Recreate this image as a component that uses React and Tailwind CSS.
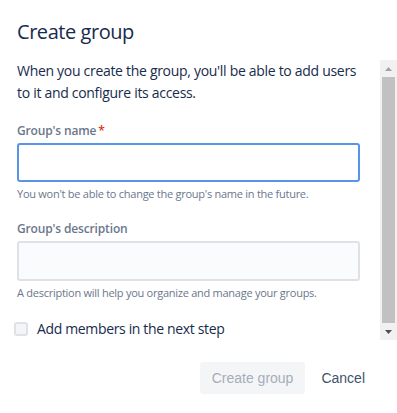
export default function App() {
  return (
    <div className="w-[397px] h-[413px] bg-white flex flex-col" style={{ fontFamily: '"Open Sans", "Noto Sans", sans-serif' }}>
      {/* Header */}
      <div className="h-[60px] pl-[17px] pt-[19px]">
        <h1 className="text-[20px] leading-[26px] text-[#172b4d] font-medium tracking-[-0.45px]">Create group</h1>
      </div>

      {/* Scrollable body with fake scrollbar */}
      <div className="h-[280px] flex">
        <div className="flex-1 pl-[17px] pr-[20px] flex flex-col">
          <p className="text-[14px] leading-[22px] text-[#172b4d] tracking-[-0.3px]">
            When you create the group, you'll be able to add users to it and configure its access.
          </p>

          <label className="mt-[19px] text-[12px] leading-[16px] font-semibold text-[#6b778c] tracking-[-0.15px]">
            Group's name<span className="text-[#de350b] ml-[2px]">*</span>
          </label>
          <input
            type="text"
            className="mt-[4px] h-[39px] w-full rounded-[3px] border-2 border-[#5796e6] bg-white outline-none"
          />
          <p className="mt-[4px] text-[11px] leading-[16px] text-[#6b778c] tracking-[-0.26px]">
            You won't be able to change the group's name in the future.
          </p>

          <label className="mt-[19px] text-[12px] leading-[16px] font-semibold text-[#6b778c] tracking-[-0.15px]">
            Group's description
          </label>
          <input
            type="text"
            className="mt-[4px] h-[40px] w-full rounded-[3px] border-2 border-[#dfe1e6] bg-[#fafbfc] outline-none"
          />
          <p className="mt-[4px] text-[11px] leading-[16px] text-[#6b778c] tracking-[-0.26px]">
            A description will help you organize and manage your groups.
          </p>

          <label className="mt-[18px] -ml-[3px] flex items-center gap-[9px]">
            <span className="w-[14px] h-[14px] rounded-[3px] border-2 border-[#dfe1e6] bg-[#f4f5f7]" />
            <span className="text-[14px] leading-[20px] text-[#172b4d] tracking-[-0.35px]">Add members in the next step</span>
          </label>
        </div>

        {/* Scrollbar */}
        <div className="w-[17px] bg-[#f1f1f1] flex flex-col">
          <div className="h-[17px] flex items-center justify-center">
            <svg width="7" height="4" viewBox="0 0 7 4"><path d="M3.5 0L7 4H0z" fill="#a3a3a3" /></svg>
          </div>
          <div className="flex-1 mx-[2px] bg-[#c1c1c1]" />
          <div className="h-[17px] flex items-center justify-center">
            <svg width="7" height="4" viewBox="0 0 7 4"><path d="M0 0H7L3.5 4z" fill="#505050" /></svg>
          </div>
        </div>
      </div>

      {/* Footer */}
      <div className="flex justify-end items-center pt-[22px] pr-[20px] gap-[4px]" style={{ fontFamily: '"Liberation Sans", Arial, sans-serif' }}>
        <button className="h-[32px] px-[12px] rounded-[3px] bg-[#f4f5f7] text-[14px] text-[#a5adba]">
          Create group
        </button>
        <button className="h-[32px] px-[12px] text-[14px] text-[#42526e]">Cancel</button>
      </div>
    </div>
  );
}
